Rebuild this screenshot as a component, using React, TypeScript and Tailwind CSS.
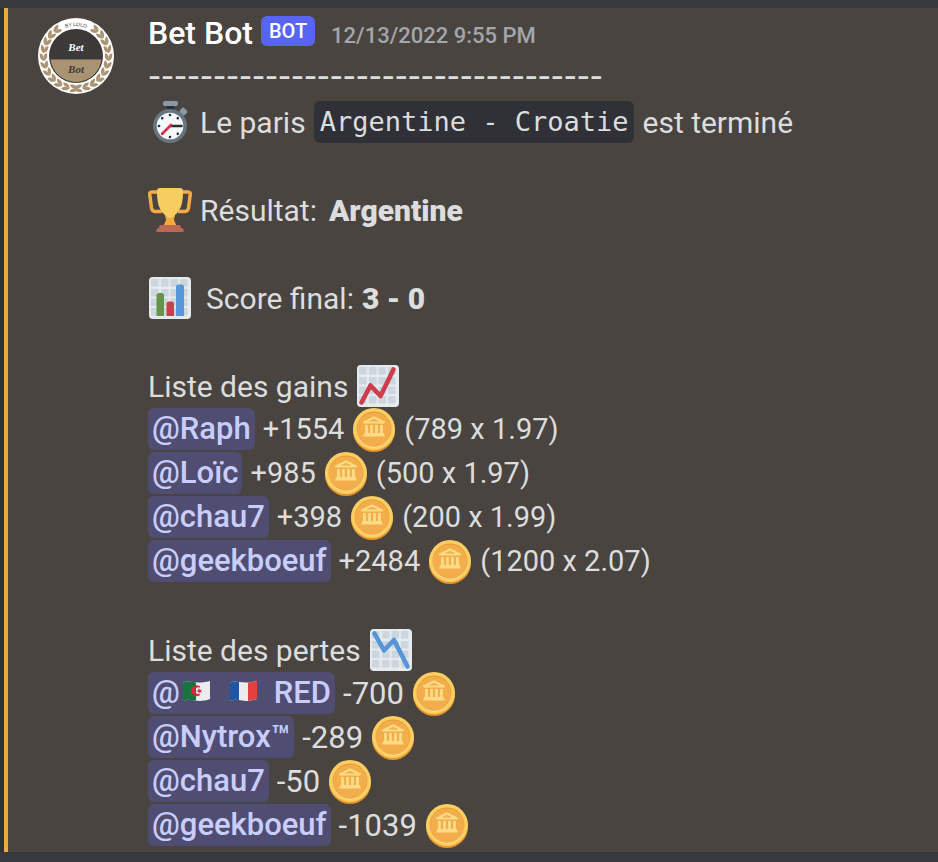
import type { ReactNode } from "react";

function Avatar() {
  const angles = Array.from({ length: 11 }, (_, i) => 36 + i * 14);
  return (
    <svg className="size-[76px] shrink-0" viewBox="0 0 76 76" role="img" aria-label="Bet Bot">
      <circle cx="38" cy="38" r="38" fill="#fff" />
      {[1, -1].map((side) => (
        <g key={side} transform={side === 1 ? undefined : "translate(76 0) scale(-1 1)"}>
          {angles.map((a) => (
            <g key={a} transform={`rotate(${a} 38 38) translate(38 5.500)`} fill="#a99373">
              <path d="M4 0C2-4-1-4-4-3.500C-3-.5-1 .5 4 0Z" />
              <path d="M4 0C2 4-1 4-4 3.500C-3 .5-1-.5 4 0Z" />
            </g>
          ))}
        </g>
      ))}
      <circle cx="38" cy="38" r="27" fill="#3b3a39" />
      <path d="M12.500 41.500H63.500A25.700 25.700 0 0 1 12.500 41.500Z" fill="#a99373" />
      <path id="arc" d="M8 38A30 30 0 0 1 68 38" fill="none" />
      <text fontFamily="Liberation Sans" fontSize="5" fill="#444" textAnchor="middle">
        <textPath href="#arc" startOffset="50%">BY LOLO</textPath>
      </text>
      <text x="38" y="33" fontFamily="Liberation Serif" fontSize="11" fontWeight="bold" fontStyle="italic" fill="#fff" textAnchor="middle">Bet</text>
      <text x="38" y="55" fontFamily="Liberation Serif" fontSize="11" fontWeight="bold" fontStyle="italic" fill="#3b3a39" textAnchor="middle">Bot</text>
    </svg>
  );
}

function Icon({ children, label }: { children: ReactNode; label: string }) {
  return (
    <svg className="size-11 shrink-0" viewBox="0 0 44 44" role="img" aria-label={label}>
      {children}
    </svg>
  );
}

function Stopwatch() {
  return (
    <Icon label="chronomètre">
      <rect x="19" y="4" width="7" height="7" fill="#292f33" />
      <rect x="15" y="1" width="15" height="5" rx="2" fill="#8899a6" />
      <rect x="32" y="8.500" width="7" height="6" rx="2" transform="rotate(43 35.500 11.500)" fill="#8899a6" />
      <circle cx="22" cy="26" r="17" fill="#66757f" />
      <circle cx="22" cy="26" r="13.300" fill="#f5f8fa" />
      {[0, 45, 135, 180, 225, 270, 315].map((a) => (
        <circle key={a} cx="22" cy="15" r="1.300" transform={`rotate(${a} 22 26)`} fill="#292f33" />
      ))}
      <path d="M22 26H33.500" stroke="#292f33" strokeWidth="2.600" strokeLinecap="round" />
      <path d="M23 25L14.500 33.500" stroke="#dd2e44" strokeWidth="2.600" strokeLinecap="round" />
    </Icon>
  );
}

function Trophy() {
  return (
    <Icon label="trophée">
      <path d="M11 4H4C2 4 1.500 5 1.800 7L3.500 20C4 22.500 5 23.500 7 23.500H14M33 4H40C42 4 42.500 5 42.200 7L40.500 20C40 22.500 39 23.500 37 23.500H30" fill="none" stroke="#f4ab45" strokeWidth="3.500" />
      <path d="M17 27H27L26 32L29 39H15L18 32Z" fill="#f4a93f" />
      <path d="M9 3Q9 0 12 0H32Q35 0 35 3C35 15 33 22 27 27Q25 30 22 30T17 27C11 22 9 15 9 3Z" fill="#f8cd60" />
      <path d="M13 37H31Q33 37 33 40Q35.500 40 35.500 42V44H8.500V42Q8.500 40 11 40Q11 37 13 37Z" fill="#bb6953" />
    </Icon>
  );
}

function ChartBase() {
  return (
    <>
      <rect x="1" y="1" width="42" height="42" rx="4" fill="#e4eaee" />
      {[3, 13, 22.500, 32].map((x) =>
        [3, 13, 22.500, 32].map((y) => (
          <rect key={`${x}-${y}`} x={x} y={y} width="7.500" height="7.500" rx="1" fill="#ccd6dd" />
        )),
      )}
    </>
  );
}

function BarChart() {
  return (
    <Icon label="graphique">
      <ChartBase />
      <path d="M8.500 40V19.500Q8.500 17 11 17H13.500Q16 17 16 19.500V40Z" fill="#67934a" />
      <path d="M18.500 40V28Q18.500 25.500 21 25.500H23.500Q26 25.500 26 28V40Z" fill="#cf3d4c" />
      <path d="M28 40V11Q28 8.500 30.500 8.500H33.500Q36 8.500 36 11V40Z" fill="#5595d8" />
    </Icon>
  );
}

function TrendChart({ up }: { up: boolean }) {
  return (
    <Icon label={up ? "hausse" : "baisse"}>
      <ChartBase />
      <path
        d={up ? "M5.500 38.500L14.500 21.500L24.500 32L37.500 5.500" : "M5.500 5.500L15 22.500L25 12L38.500 38.500"}
        fill="none"
        stroke={up ? "#cf3d4c" : "#5595d8"}
        strokeWidth="4.600"
        strokeLinecap="round"
        strokeLinejoin="round"
      />
    </Icon>
  );
}

function Coin() {
  return (
    <Icon label="pièce">
      <circle cx="22" cy="23" r="21" fill="#e98f2c" />
      <circle cx="22" cy="21" r="21" fill="#f8cf60" />
      <circle cx="22" cy="22" r="17.500" fill="#fbe19a" />
      <circle cx="22" cy="21" r="17.500" fill="#e99a38" />
      <circle cx="22" cy="21.500" r="17" fill="#f3ae4b" />
      <path d="M12 14.500L22 9.500L32 14.500Z" fill="#f3ae4b" stroke="#fbdc86" strokeWidth="2" strokeLinejoin="round" />
      <path d="M14.500 17V26M19.500 17V26M24.500 17V26M29.500 17V26" stroke="#fbdc86" strokeWidth="2.800" />
      <path d="M12.500 25H31.500L33 28.500H11Z" fill="#fbdc86" />
    </Icon>
  );
}

function Flag({ country }: { country: "dz" | "fr" }) {
  const outline = "M1 2.500C8-.5 12 5 28 1V19C14 24 9 17 1 21Z";
  return (
    <svg className="h-[22px] w-[29px] shrink-0" viewBox="0 0 29 22" role="img" aria-label={country}>
      <clipPath id={`flag-${country}`}>
        <path d={outline} />
      </clipPath>
      <g clipPath={`url(#flag-${country})`}>
        <rect width="29" height="22" fill="#ececef" />
        <rect width={country === "dz" ? 14 : 10} height="22" fill={country === "dz" ? "#16743c" : "#1d56a5"} />
        {country === "fr" ? (
          <rect x="19" width="10" height="22" fill="#e4403d" />
        ) : (
          <>
            <path d="M18 7A5 5 0 1 0 18 14.500A4 4 0 1 1 18 7Z" fill="#d9263c" stroke="#d9263c" />
            <path d="M14 11L16.500 10.200L16.500 8L18 10L20 9.500L18.800 11L20 12.700L18 12L16.500 14V11.800Z" fill="#d9263c" />
          </>
        )}
      </g>
    </svg>
  );
}

function Line({ children }: { children?: ReactNode }) {
  return <div className="flex h-11 items-center gap-2 whitespace-nowrap">{children}</div>;
}

function Mention({ children }: { children: ReactNode }) {
  return (
    <a
      href="#profile"
      className="mb-0.5 flex h-[42px] items-center rounded-md bg-[#504d72] px-1 text-[31px] leading-10 font-medium text-[#c9cdfb]"
    >
      {children}
    </a>
  );
}

interface Entry {
  name: ReactNode;
  amount: string;
  detail?: string;
}

const gains: Entry[] = [
  { name: "@Raph", amount: "+1554", detail: "(789 x 1.97)" },
  { name: "@Loïc", amount: "+985", detail: "(500 x 1.97)" },
  { name: "@chau7", amount: "+398", detail: "(200 x 1.99)" },
  { name: "@geekboeuf", amount: "+2484", detail: "(1200 x 2.07)" },
];

const losses: Entry[] = [
  {
    name: (
      <>
        @
        <span className="mr-4 mb-1 ml-0.5 flex gap-[18px]">
          <Flag country="dz" />
          <Flag country="fr" />
        </span>
        RED
      </>
    ),
    amount: "-700",
  },
  { name: "@Nytrox™", amount: "-289" },
  { name: "@chau7", amount: "-50" },
  { name: "@geekboeuf", amount: "-1039" },
];

function Entries({ items }: { items: Entry[] }) {
  return (
    <>
      {items.map((item, i) => (
        <Line key={i}>
          <Mention>{item.name}</Mention>
          <span className={item.detail ? "text-[29px]" : "text-[31px]"}>{item.amount}</span>
          <Coin />
          {item.detail && <span className="text-[29px]">{item.detail}</span>}
        </Line>
      ))}
    </>
  );
}

export default function App() {
  return (
    <main className="min-h-screen bg-[#37393f] pt-2 pb-2.5 font-['Roboto',sans-serif] text-[30px] text-[#dcddde]">
      <div className="flex">
        <div className="w-1 shrink-0 bg-[#2f3136]" />
        <article className="flex min-w-0 flex-1 items-start gap-[34px] border-l-4 border-[#f0a93f] bg-[#49443f] pr-4 pb-1 pl-[30px]">
          <div className="pt-2.5">
            <Avatar />
          </div>
          <div className="min-w-0 flex-1">
            <header className="flex h-12 items-center gap-2 whitespace-nowrap leading-none">
              <h1 className="pt-0.5 text-[32px] font-medium text-white">Bet Bot</h1>
              <span className="mr-2 mb-0.5 flex h-[30px] items-center rounded-md bg-[#5865f2] px-2 text-xl font-medium text-white">
                BOT
              </span>
              <time className="pt-2 text-[22px] font-medium text-[#a3a6aa]">12/13/2022 9:55 PM</time>
            </header>
            <Line>
              <span className="pb-1.5 font-['DejaVu_Sans',sans-serif] text-[36px] leading-10">-----------------------------------</span>
            </Line>
            <Line>
              <Stopwatch />
              <span>Le paris</span>
              <code className="flex h-[42px] items-center rounded-md bg-[#2f3136] px-1.5 font-['DejaVu_Sans_Mono',monospace] text-[27px]">
                Argentine - Croatie
              </code>
              <span>est terminé</span>
            </Line>
            <Line />
            <Line>
              <Trophy />
              <span>Résultat:</span>
              <strong className="pl-1 font-black">Argentine</strong>
            </Line>
            <Line />
            <Line>
              <BarChart />
              <span className="pl-1.5">Score final:</span>
              <strong className="font-black">3 - 0</strong>
            </Line>
            <Line />
            <Line>
              <h2>Liste des gains</h2>
              <TrendChart up />
            </Line>
            <Entries items={gains} />
            <Line />
            <Line>
              <h2>Liste des pertes</h2>
              <TrendChart up={false} />
            </Line>
            <Entries items={losses} />
          </div>
        </article>
      </div>
    </main>
  );
}
